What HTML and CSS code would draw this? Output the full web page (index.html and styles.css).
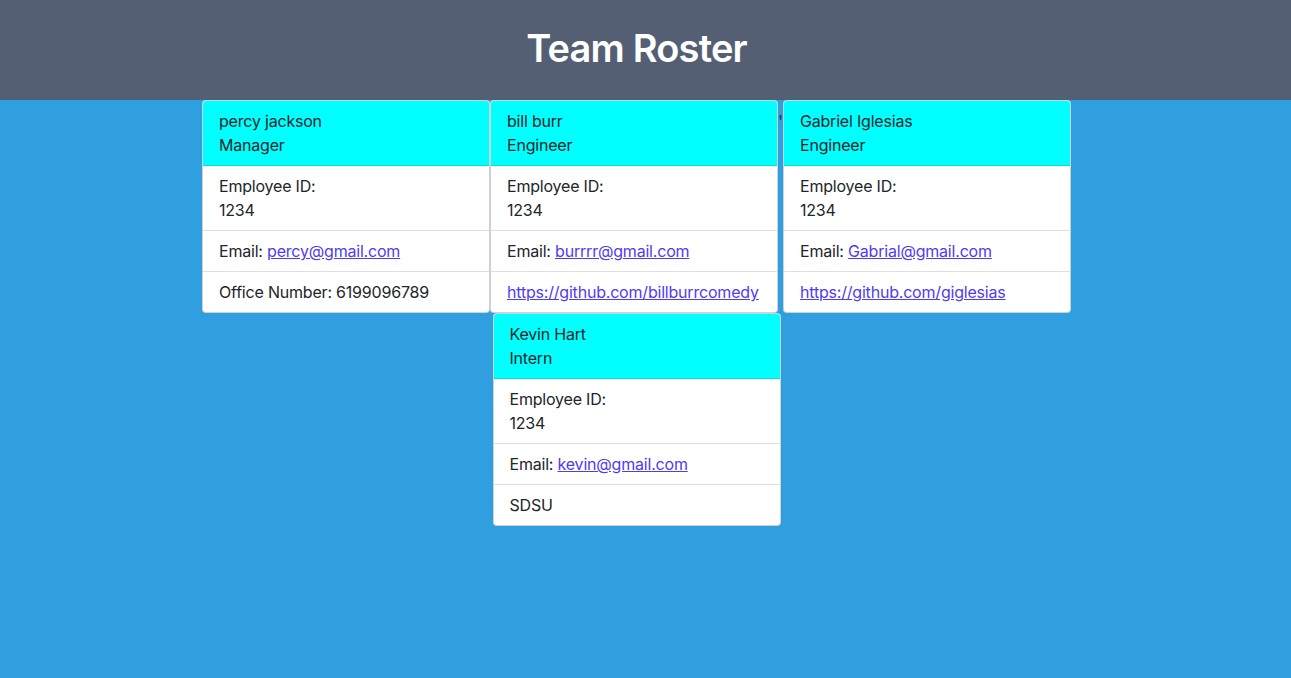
FILE: index.html
```html
<!DOCTYPE html>
<html lang="en">
<head>
<meta charset="utf-8">
<title>Team Roster</title>
<link rel="stylesheet" href="styles.css">
</head>
<body>
<header class="jumbo">
  <h1 class="title">Team Roster</h1>
</header>
<main class="roster">
  <div class="card">
    <div class="card-header">percy jackson<br>Manager</div>
    <ul class="list">
      <li class="item">Employee ID:<br>1234</li>
      <li class="item">Email: <a href="mailto:percy@gmail.com">percy@gmail.com</a></li>
      <li class="item">Office Number: 6199096789</li>
    </ul>
  </div>
  <div class="card">
    <div class="card-header">bill burr<br>Engineer</div>
    <ul class="list">
      <li class="item">Employee ID:<br>1234</li>
      <li class="item">Email: <a href="mailto:burrrr@gmail.com">burrrr@gmail.com</a></li>
      <li class="item"><a href="https://github.com/billburrcomedy">https://github.com/billburrcomedy</a></li>
    </ul>
  </div>
  <span class="stray">'</span>
  <div class="card">
    <div class="card-header">Gabriel Iglesias<br>Engineer</div>
    <ul class="list">
      <li class="item">Employee ID:<br>1234</li>
      <li class="item">Email: <a href="mailto:Gabrial@gmail.com">Gabrial@gmail.com</a></li>
      <li class="item"><a href="https://github.com/giglesias">https://github.com/giglesias</a></li>
    </ul>
  </div>
  <div class="card">
    <div class="card-header">Kevin Hart<br>Intern</div>
    <ul class="list">
      <li class="item">Employee ID:<br>1234</li>
      <li class="item">Email: <a href="mailto:kevin@gmail.com">kevin@gmail.com</a></li>
      <li class="item">SDSU</li>
    </ul>
  </div>
</main>
</body>
</html>
```
FILE: styles.css
```css
* { box-sizing: border-box; }
html, body { margin: 0; padding: 0; }
body {
  background: #2f9fe0;
  font-family: Inter, "Noto Sans", sans-serif;
  font-size: 16px;
  line-height: 24px;
  letter-spacing: -0.2px;
  color: #212529;
  min-height: 678px;
}
.jumbo {
  height: 100px;
  background: #545f74;
  display: flex;
  align-items: center;
  justify-content: center;
  padding-right: 18px;
  padding-bottom: 5px;
}
.title {
  margin: 0;
  font-size: 38px;
  font-weight: 600;
  line-height: 46px;
  color: #fff;
  letter-spacing: -0.8px;
}
.roster {
  width: 869px;
  margin-left: calc((100% - 18px - 869px) / 2);
  display: flex;
  flex-wrap: wrap;
  justify-content: center;
}
.card {
  width: 288px;
  background: #fff;
  border: 1px solid rgba(0, 0, 0, 0.18);
  border-radius: 4px;
  overflow: hidden;
}
.card-header {
  background: #00ffff;
  padding: 8px 16px;
  border-bottom: 1px solid rgba(0, 0, 0, 0.125);
}
.list {
  list-style: none;
  margin: 0;
  padding: 0;
}
.item {
  padding: 8px 16px;
  border-bottom: 1px solid rgba(0, 0, 0, 0.125);
  white-space: nowrap;
}
.item:last-child { border-bottom: 0; }
.item a { color: #4f3cf0; text-decoration: underline; }
.stray {
  width: 5px;
  font-size: 17px;
  line-height: 24px;
  padding-top: 10px;
  text-align: center;
  color: #1a2a3a;
}
```
